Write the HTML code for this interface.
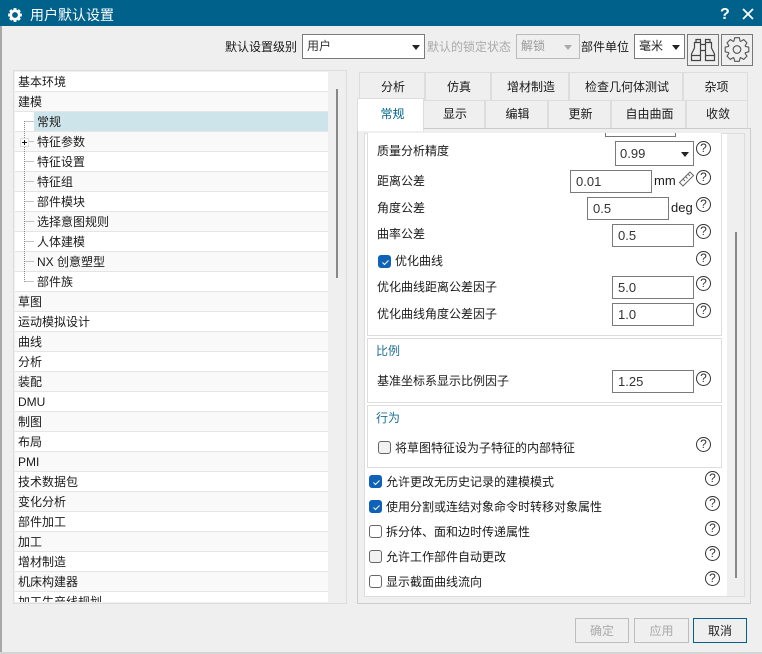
<!DOCTYPE html>
<html><head><meta charset="utf-8"><style>
html,body{margin:0;padding:0}
body{width:762px;height:654px;position:relative;overflow:hidden;background:#efefef;font:12px/20px "Liberation Sans","Noto Sans CJK SC",sans-serif;color:#1a1a1a}
div,span{position:absolute;box-sizing:border-box;white-space:nowrap}
.r{left:15px;width:313px;height:20px;padding-left:3px;border-bottom:1px solid #e5e5e5;background:#fff}
.a{background:#f9f9f9}
.s{padding-left:22px}
.tab{height:29px;background:#efefef;border:1px solid #ddd;text-align:center;line-height:29px;padding-left:2px}
.t{line-height:20px}
.i{background:#fff;border:1px solid #7a7a7a;height:23px;line-height:21px;padding-left:5px;font-size:13px;color:#333}
.h{width:15px;height:15px;border:1px solid #333;border-radius:50%;background:#fff;text-align:center;font-size:12px;line-height:13px;color:#333}
.c{width:13px;height:13px;border:1px solid #666;border-radius:3px;background:#fff}
.k{background:#0f62b8;border-color:#0f62b8;color:#fff}
.k svg{position:absolute;left:1px;top:1px}
.box{background:#fff;border:1px solid #ddd}
.b{height:25px;width:54px;border:1px solid #bdbdbd;background:#efefef;color:#aaa;text-align:center;line-height:24px}
.ar{width:0;height:0;border-left:4px solid transparent;border-right:4px solid transparent;border-top:5px solid #222}
.ti{color:#1f6f94}
</style></head><body>
<div style="left:0;top:0;width:762px;height:26px;background:#00628b"></div>
<svg style="position:absolute;left:8px;top:8px" width="14" height="14" viewBox="-12 -12 24 24"><path fill="#fff" fill-rule="evenodd" d="M8.46 -3.08L11.78 -2.29L11.78 2.29L8.46 3.08L8.16 3.8L9.95 6.71L6.71 9.95L3.8 8.16L3.08 8.46L2.29 11.78L-2.29 11.78L-3.08 8.46L-3.8 8.16L-6.71 9.95L-9.95 6.71L-8.16 3.8L-8.46 3.08L-11.78 2.29L-11.78 -2.29L-8.46 -3.08L-8.16 -3.8L-9.95 -6.71L-6.71 -9.95L-3.8 -8.16L-3.08 -8.46L-2.29 -11.78L2.29 -11.78L3.08 -8.46L3.8 -8.16L6.71 -9.95L9.95 -6.71L8.16 -3.8Z M5 0A5 5 0 1 0 -5 0A5 5 0 1 0 5 0Z"/></svg>
<div style="left:30px;top:5px;color:#fff;font-size:14px">用户默认设置</div>
<div style="left:720px;top:5px;color:#fff;font:bold 16px/20px 'Liberation Sans',sans-serif">?</div>
<svg style="position:absolute;left:742px;top:8px" width="12" height="12"><path d="M1 1L11 11M11 1L1 11" stroke="#fff" stroke-width="1.8"/></svg>
<div style="left:0;top:26px;width:1.5px;height:628px;background:#a8a8a8"></div>
<div style="left:0;top:652px;width:762px;height:2px;background:#d4d4d4"></div>

<div class="t" style="left:225px;top:37px">默认设置级别</div>
<div class="i" style="left:302px;top:34px;width:123px;height:25px;font-size:12px;padding-left:4px;line-height:23px">用户</div>
<div class="ar" style="left:412px;top:45px"></div>
<div class="t" style="left:427px;top:37px;color:#aaa">默认的锁定状态</div>
<div class="i" style="left:516px;top:34px;width:64px;height:25px;font-size:12px;border-color:#bbb;background:#efefef;color:#999;padding-left:4px;line-height:23px">解锁</div>
<div class="ar" style="left:564px;top:45px;border-top-color:#aaa"></div>
<div class="t" style="left:581px;top:37px">部件单位</div>
<div class="i" style="left:634px;top:34px;width:51px;height:25px;font-size:12px;padding-left:4px;color:#222;line-height:23px">毫米</div>
<div class="ar" style="left:672px;top:45px"></div>
<div style="left:687px;top:34px;width:32px;height:32px;border:1px solid #777"></div>
<svg style="position:absolute;left:687px;top:34px" width="32" height="32" fill="none" stroke="#444" stroke-width="1.2"><path d="M9 5.500h4.500v3H9zM18.500 5.500H23v3h-4.500zM7.500 8.500H13.500V26.500H4.500V20L7.500 14zM18.500 8.500H24.500V14L27.500 20V26.500H18.500zM13.500 10.500H18.500M13.500 16.500H18.500M4.500 21.500H13.500M18.500 21.500H27.500"/></svg>
<div style="left:721px;top:34px;width:32px;height:32px;border:1px solid #777"></div>
<svg style="position:absolute;left:721px;top:34px" width="32" height="32" viewBox="-16 -15.500 32 32" fill="none" stroke="#555" stroke-width="1.1"><path d="M8.46 -3.08L11.78 -2.29L11.78 2.29L8.46 3.08L8.16 3.8L9.95 6.71L6.71 9.95L3.8 8.16L3.08 8.46L2.29 11.78L-2.29 11.78L-3.08 8.46L-3.8 8.16L-6.71 9.95L-9.95 6.71L-8.16 3.8L-8.46 3.08L-11.78 2.29L-11.78 -2.29L-8.46 -3.08L-8.16 -3.8L-9.95 -6.71L-6.71 -9.95L-3.8 -8.16L-3.08 -8.46L-2.29 -11.78L2.29 -11.78L3.08 -8.46L3.8 -8.16L6.71 -9.95L9.95 -6.71L8.16 -3.8Z"/><circle r="3.800"/></svg>

<div style="left:13px;top:70px;width:334px;height:534px;border:1.500px solid #ddd;background:#efefef;overflow:hidden"></div>
<div style="left:15px;top:72px;width:313px;height:530px;overflow:hidden;background:#fff">
<div class="r" style="left:0;top:0">基本环境</div>
<div class="r a" style="left:0;top:20px">建模</div>
<div class="r" style="left:0;top:40px"></div>
<div style="left:19px;top:40px;width:294px;height:19px;background:#cde4ea;padding-left:3px">常规</div>
<div class="r a s" style="left:0;top:60px">特征参数</div>
<div class="r s" style="left:0;top:80px">特征设置</div>
<div class="r a s" style="left:0;top:100px">特征组</div>
<div class="r s" style="left:0;top:120px">部件模块</div>
<div class="r a s" style="left:0;top:140px">选择意图规则</div>
<div class="r s" style="left:0;top:160px">人体建模</div>
<div class="r a s" style="left:0;top:180px">NX 创意塑型</div>
<div class="r s" style="left:0;top:200px">部件族</div>
<div class="r a" style="left:0;top:220px">草图</div>
<div class="r" style="left:0;top:240px">运动模拟设计</div>
<div class="r a" style="left:0;top:260px">曲线</div>
<div class="r" style="left:0;top:280px">分析</div>
<div class="r a" style="left:0;top:300px">装配</div>
<div class="r" style="left:0;top:320px">DMU</div>
<div class="r a" style="left:0;top:340px">制图</div>
<div class="r" style="left:0;top:360px">布局</div>
<div class="r a" style="left:0;top:380px">PMI</div>
<div class="r" style="left:0;top:400px">技术数据包</div>
<div class="r a" style="left:0;top:420px">变化分析</div>
<div class="r" style="left:0;top:440px">部件加工</div>
<div class="r a" style="left:0;top:460px">加工</div>
<div class="r" style="left:0;top:480px">增材制造</div>
<div class="r a" style="left:0;top:500px">机床构建器</div>
<div class="r" style="left:0;top:520px">加工生产线规划</div>
</div>
<svg style="position:absolute;left:15px;top:112px" width="22" height="175" fill="none" stroke="#888" stroke-dasharray="1 1"><path d="M9.500 9V171M9.500 9.500H19M9.500 29.500H19M9.500 49.500H19M9.500 69.500H19M9.500 89.500H19M9.500 109.500H19M9.500 129.500H19M9.500 149.500H19M9.500 169.500H19"/></svg>
<div style="left:20px;top:138px;width:9px;height:9px;background:#fff;border:1px solid #ddd"></div>
<svg style="position:absolute;left:20px;top:138px" width="9" height="9"><path d="M2 4.500H7M4.500 2V7" stroke="#111"/></svg>
<div style="left:336px;top:89px;width:2px;height:189px;background:#888"></div>

<div class="tab" style="left:359px;top:72px;width:66px">分析</div>
<div class="tab" style="left:425px;top:72px;width:66px">仿真</div>
<div class="tab" style="left:491px;top:72px;width:78px">增材制造</div>
<div class="tab" style="left:569px;top:72px;width:114px">检查几何体测试</div>
<div class="tab" style="left:683px;top:72px;width:65px">杂项</div>
<div class="tab" style="left:423px;top:100px;width:62px;line-height:27px">显示</div>
<div class="tab" style="left:485px;top:100px;width:63px;line-height:27px">编辑</div>
<div class="tab" style="left:548px;top:100px;width:63px;line-height:27px">更新</div>
<div class="tab" style="left:611px;top:100px;width:75px;line-height:27px">自由曲面</div>
<div class="tab" style="left:686px;top:100px;width:62px;line-height:27px">收敛</div>

<div style="left:357px;top:128px;width:394px;height:476px;border:1.500px solid #ccc;background:#efefef"></div>
<div style="left:364px;top:133px;width:381px;height:464px;border:1px solid #ddd;background:#fff"></div>
<div style="left:727px;top:134px;width:17px;height:462px;background:#efefef"></div>
<div style="left:735px;top:232px;width:2px;height:346px;background:#888"></div>
<div style="left:357px;top:98px;width:67px;height:33px;background:#fff;border:1px solid #ddd;border-bottom:0;text-align:center;line-height:31px;padding-left:4px;color:#00628b">常规</div>

<div class="box" style="left:367px;top:133px;width:355px;height:203px;border-top:0"></div>
<div style="left:605px;top:133px;width:71px;height:4px;border:1px solid #777;border-top:0;background:#fff"></div>
<div class="t" style="left:377px;top:141px">质量分析精度</div>
<div class="i" style="left:615px;top:141px;width:79px;height:25px;line-height:23px;padding-left:4px">0.99</div>
<div class="ar" style="left:681px;top:152px"></div>
<div class="h" style="left:696px;top:141px">?</div>
<div class="t" style="left:377px;top:171px">距离公差</div>
<div class="i" style="left:570px;top:170px;width:82px">0.01</div>
<div class="t" style="left:654px;top:171px;font-size:13px">mm</div>
<svg style="position:absolute;left:678px;top:170px" width="17" height="18" fill="none" stroke="#666"><path d="M1.500 12.500L12 2l3.500 3.500L5 16zM5 9l2 2M7.500 6.500l2 2M10 4l2 2"/></svg>
<div class="h" style="left:696px;top:170px">?</div>
<div class="t" style="left:377px;top:198px">角度公差</div>
<div class="i" style="left:587px;top:197px;width:82px">0.5</div>
<div class="t" style="left:671px;top:198px;font-size:13px">deg</div>
<div class="h" style="left:696px;top:197px">?</div>
<div class="t" style="left:377px;top:224px">曲率公差</div>
<div class="i" style="left:612px;top:224px;width:82px">0.5</div>
<div class="h" style="left:696px;top:224px">?</div>
<div class="c k" style="left:378px;top:255px"><svg width="11" height="11" fill="none" stroke="#fff"><path d="M2.500 5.500L4.500 7.500L8.500 3.500"/></svg></div>
<div class="t" style="left:395px;top:251px">优化曲线</div>
<div class="h" style="left:696px;top:251px">?</div>
<div class="t" style="left:377px;top:277px">优化曲线距离公差因子</div>
<div class="i" style="left:612px;top:276px;width:82px">5.0</div>
<div class="h" style="left:696px;top:276px">?</div>
<div class="t" style="left:377px;top:304px">优化曲线角度公差因子</div>
<div class="i" style="left:612px;top:303px;width:82px">1.0</div>
<div class="h" style="left:696px;top:303px">?</div>

<div class="box" style="left:367px;top:338px;width:355px;height:65px"></div>
<div class="t ti" style="left:376px;top:341px">比例</div>
<div class="t" style="left:377px;top:371px">基准坐标系显示比例因子</div>
<div class="i" style="left:612px;top:370px;width:82px">1.25</div>
<div class="h" style="left:696px;top:371px">?</div>

<div class="box" style="left:367px;top:405px;width:355px;height:63px"></div>
<div class="t ti" style="left:376px;top:408px">行为</div>
<div class="c" style="left:378px;top:441px;background:#f2f2f2"></div>
<div class="t" style="left:395px;top:438px">将草图特征设为子特征的内部特征</div>
<div class="h" style="left:696px;top:437px">?</div>

<div class="c k" style="left:369px;top:475px"><svg width="11" height="11" fill="none" stroke="#fff"><path d="M2.500 5.500L4.500 7.500L8.500 3.500"/></svg></div>
<div class="t" style="left:386px;top:472px">允许更改无历史记录的建模模式</div>
<div class="h" style="left:705px;top:471px">?</div>
<div class="c k" style="left:369px;top:500px"><svg width="11" height="11" fill="none" stroke="#fff"><path d="M2.500 5.500L4.500 7.500L8.500 3.500"/></svg></div>
<div class="t" style="left:386px;top:497px">使用分割或连结对象命令时转移对象属性</div>
<div class="h" style="left:705px;top:496px">?</div>
<div class="c" style="left:369px;top:525px"></div>
<div class="t" style="left:386px;top:522px">拆分体、面和边时传递属性</div>
<div class="h" style="left:705px;top:521px">?</div>
<div class="c" style="left:369px;top:550px;background:#f2f2f2"></div>
<div class="t" style="left:386px;top:547px">允许工作部件自动更改</div>
<div class="h" style="left:705px;top:546px">?</div>
<div class="c" style="left:369px;top:575px"></div>
<div class="t" style="left:386px;top:572px">显示截面曲线流向</div>
<div class="h" style="left:705px;top:571px">?</div>

<div class="b" style="left:575px;top:618px">确定</div>
<div class="b" style="left:634px;top:618px;width:55px">应用</div>
<div class="b" style="left:693px;top:618px;border-color:#00628b;color:#222;border-width:1.500px">取消</div>
</body></html>
